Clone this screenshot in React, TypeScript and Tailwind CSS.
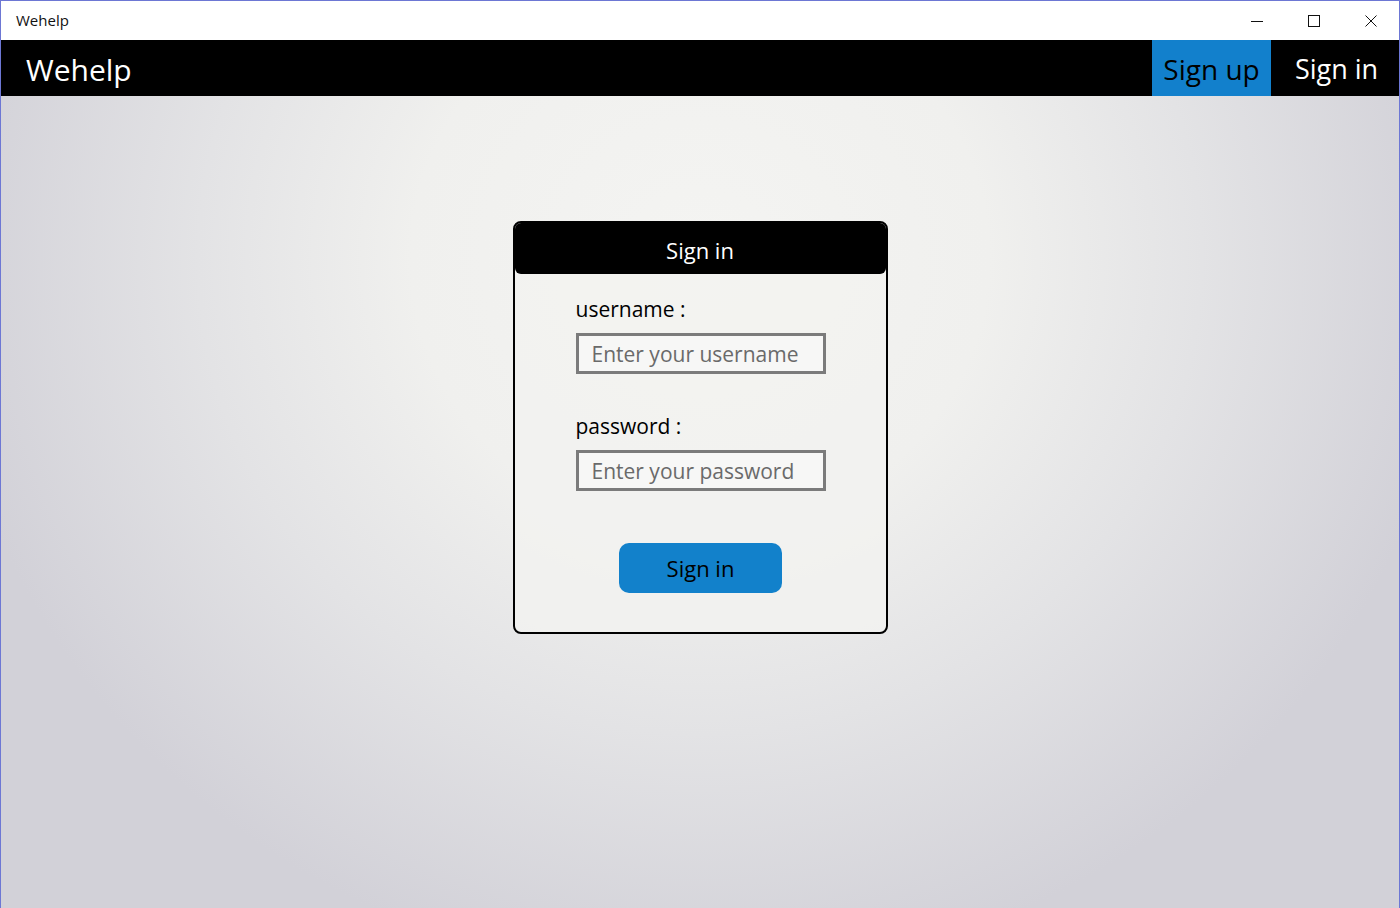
import { useState } from "react";

const font = { fontFamily: '"Open Sans", "Noto Sans", sans-serif' };

function TitleBar() {
  return (
    <div className="flex h-[39px] items-center justify-between bg-white">
      <span className="pl-[15px] text-[15px] text-[#111]" style={font}>
        Wehelp
      </span>
      <div className="flex h-full">
        <button className="flex h-full w-[57px] items-center justify-center">
          <svg width="12" height="12" viewBox="0 0 12 12">
            <path d="M0 6.5h12" stroke="#111" strokeWidth="1" />
          </svg>
        </button>
        <button className="flex h-full w-[57px] items-center justify-center">
          <svg width="12" height="12" viewBox="0 0 12 12">
            <rect x="0.5" y="0.5" width="11" height="11" fill="none" stroke="#111" strokeWidth="1" />
          </svg>
        </button>
        <button className="flex h-full w-[57px] items-center justify-center">
          <svg width="12" height="12" viewBox="0 0 12 12">
            <path d="M0.5 0.5l11 11M11.5 0.5l-11 11" stroke="#111" strokeWidth="1" />
          </svg>
        </button>
      </div>
    </div>
  );
}

function NavBar() {
  return (
    <div className="flex h-[56px] items-stretch justify-between bg-black" style={font}>
      <div className="flex items-center pl-[25px] pt-[2px] text-[30px] text-white">Wehelp</div>
      <div className="flex">
        <button className="flex w-[119px] items-center justify-center bg-[#1280cc] pt-[2px] text-[28px] text-black">
          Sign up
        </button>
        <button className="flex w-[128px] items-center justify-center pl-[3px] pt-[2px] text-[27px] text-white">
          Sign in
        </button>
      </div>
    </div>
  );
}

function Field({
  label,
  placeholder,
  type = "text",
}: {
  label: string;
  placeholder: string;
  type?: string;
}) {
  const [value, setValue] = useState("");
  return (
    <div className="flex flex-col">
      <label className="text-[21px] leading-[30px] text-black">{label}</label>
      <input
        type={type}
        value={value}
        onChange={(e) => setValue(e.target.value)}
        placeholder={placeholder}
        className="mt-[9px] h-[41px] w-[250px] border-[3px] border-[#7b7b7b] bg-[#f7f7f6] px-[13px] text-[21px] text-black outline-none placeholder:text-[#6a6a6a]"
        style={font}
      />
    </div>
  );
}

function SignInCard() {
  return (
    <div
      className="flex w-[375px] flex-col rounded-[8px] border-2 border-black bg-[#f2f2f0]/80"
      style={font}
    >
      <div className="flex h-[51px] items-center justify-center rounded-[6px] bg-black pt-[3px] text-[22px] text-white">
        Sign in
      </div>
      <div className="flex flex-col pl-[61px] pt-[20px]">
        <Field label="username :" placeholder="Enter your username" />
        <div className="h-[37px]" />
        <Field label="password :" placeholder="Enter your password" type="password" />
      </div>
      <div className="flex justify-center pb-[39px] pl-[1px] pt-[52px]">
        <button className="h-[50px] w-[163px] rounded-[10px] bg-[#1281cb] text-[22px] text-black">
          Sign in
        </button>
      </div>
    </div>
  );
}

export default function App() {
  return (
    <div className="flex h-[908px] w-[1400px] flex-col overflow-hidden border-x border-t border-[#6d77d4]">
      <TitleBar />
      <NavBar />
      <main className="flex flex-1 justify-center bg-[radial-gradient(ellipse_760px_720px_at_50%_20%,#f4f4f2_0%,#f0f0ee_38%,#e3e3e5_66%,#d2d1d8_100%)] pt-[125px]">
        <div className="h-fit">
          <SignInCard />
        </div>
      </main>
    </div>
  );
}
